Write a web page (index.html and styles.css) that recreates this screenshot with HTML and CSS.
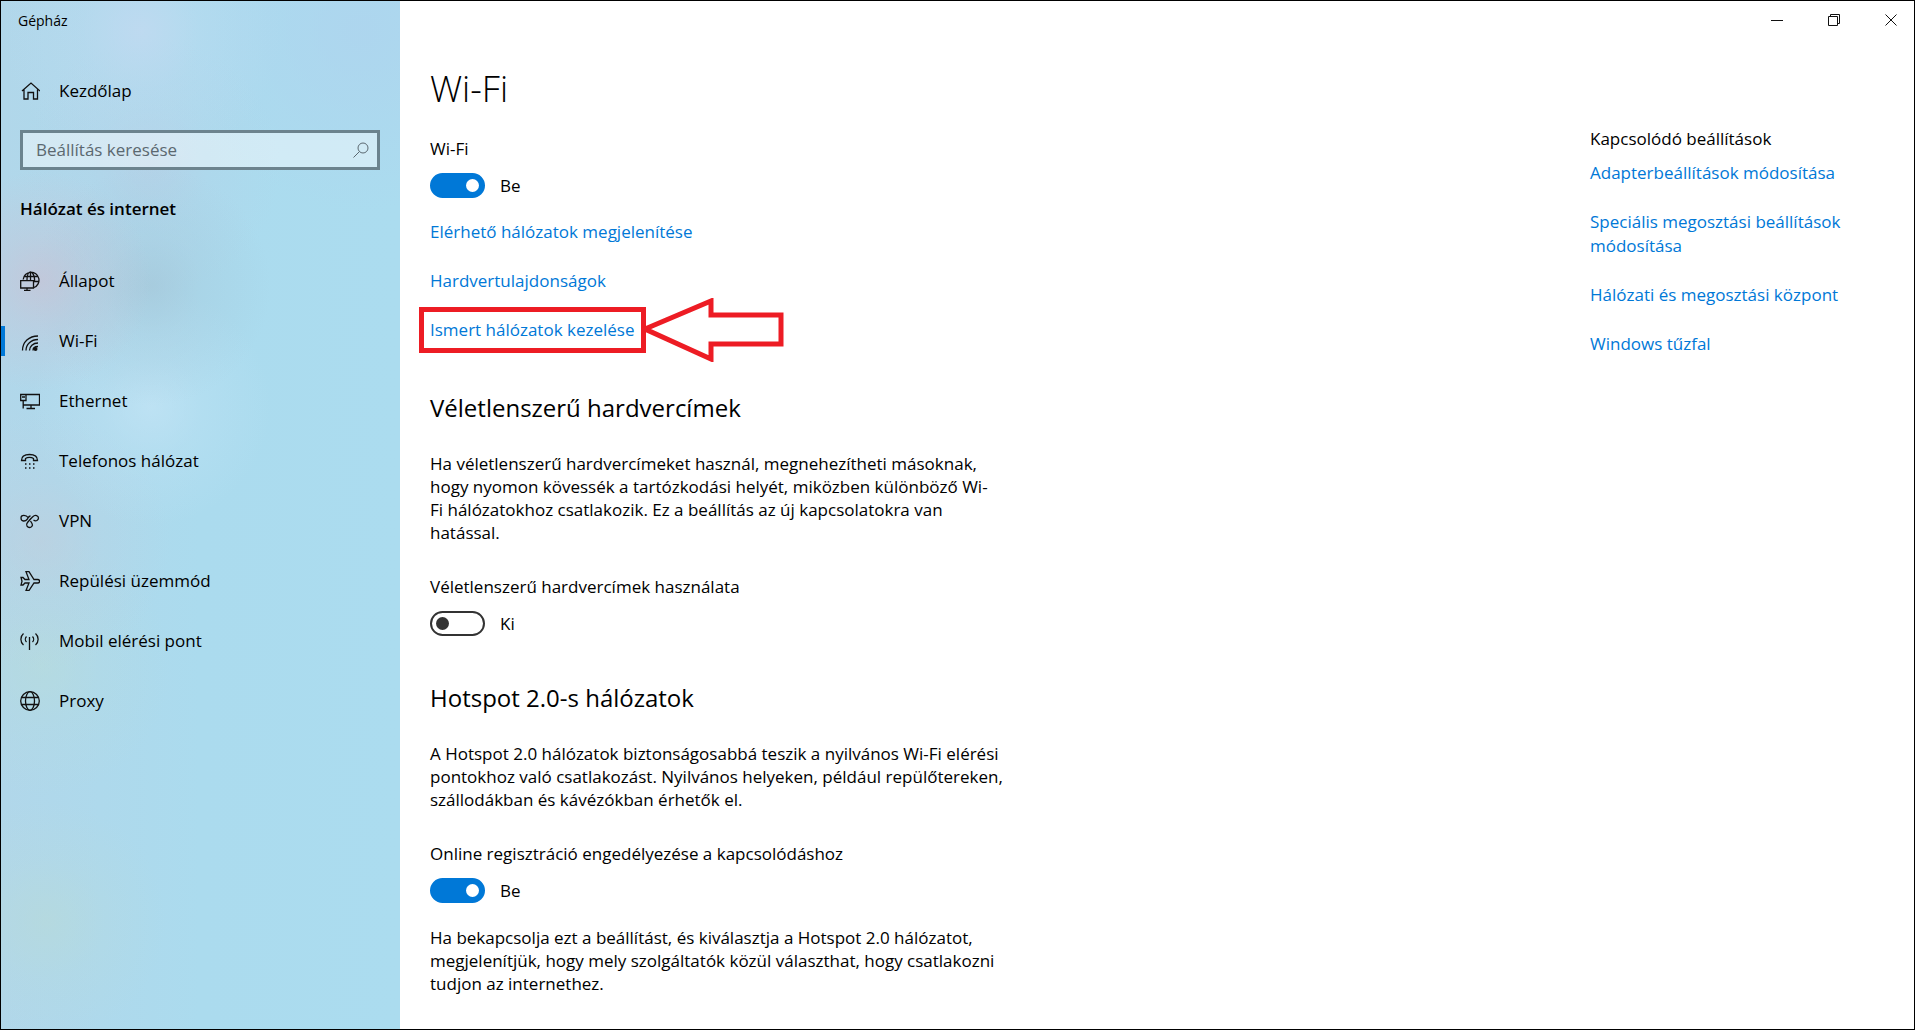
FILE: index.html
```html
<!DOCTYPE html>
<html lang="hu">
<head>
    <meta charset="UTF-8">
    <meta name="viewport" content="width=device-width, initial-scale=1.0">
    <title>Gépház</title>
    <link rel="stylesheet" href="styles.css">
</head>
<body>
    <div class="window">
        <aside class="sidebar">
            <div class="app-title">Gépház</div>

            <a class="nav-item home" href="#">
                <svg viewBox="0 0 20 20"><path d="M2 10 11 2l9 8M4 8.500v9.500h4v-6.500h5.500v6.500h4V8.500"/></svg>
                <span>Kezdőlap</span>
            </a>

            <form class="search">
                <input type="text" placeholder="Beállítás keresése" aria-label="Beállítás keresése">
                <button type="submit" aria-label="Keresés">
                    <svg viewBox="0 0 16 16"><circle cx="10" cy="6" r="5"/><path d="M6.500 9.500.5 15.500"/></svg>
                </button>
            </form>

            <h2 class="group-title">Hálózat és internet</h2>

            <nav class="nav">
                <a class="nav-item" href="#">
                    <svg viewBox="0 0 20 20"><path d="M3.200 8.500A7.900 7.900 0 1 1 14 16.500M7 9c0-4.500 1.500-8 3.500-8s4.500 4 4 9M4.500 5.500h13M14 10.500h4.500M10.500 1v8M.7 9.700h12.800v7.300H.7zM7 17v2.500M4 19.500h6.500"/></svg>
                    <span>Állapot</span>
                </a>
                <a class="nav-item active" href="#">
                    <svg viewBox="0 0 20 20"><path d="M2.500 19.500C2.500 11 9 5 18 5M6 19.500C6 13.500 11 8.500 18 8.500M9.500 19.500c0-4 3.500-7.500 8.500-7.500M13 19.500c0-2.500 2-4 5-4"/><circle class="fill" cx="15.500" cy="18" r="2"/></svg>
                    <span>Wi-Fi</span>
                </a>
                <a class="nav-item" href="#">
                    <svg viewBox="0 0 20 20"><path d="M6 3.500h13.500v10.500H3M11 14v3.500M6.500 17.500h8.500M.7 3.500H6v6H.7zM3.200 9.500v8M2 6h3"/></svg>
                    <span>Ethernet</span>
                </a>
                <a class="nav-item" href="#">
                    <svg viewBox="0 0 20 20"><path d="M1.500 9.500C1.500 5 5 3.500 9.500 3.500s8 1.500 8 6h-4V7.500c-2-1.500-6-1.500-8 0v2z"/><path d="M5 13h1.500M9 13h1.500M13 13h1.500M5 17h1.500M9 17h1.500M13 17h1.500"/></svg>
                    <span>Telefonos hálózat</span>
                </a>
                <a class="nav-item" href="#">
                    <svg viewBox="0 0 20 20"><path d="M8 6.500C6.500 4 1 3 1 7s4.500 3.500 6 1.500S8.500 5 10.500 5M11 7.500l-3.500 4c-2.500 3 .5 5 2 5s4-1.500 2.500-4L10.500 10M9 9.500l3.500-3.500C15.500 3 18.500 5 18.500 7s-2.500 4-5 2"/></svg>
                    <span>VPN</span>
                </a>
                <a class="nav-item" href="#">
                    <svg viewBox="0 0 20 20"><path d="M1 6.500h2l2 2h4L6 .7h3l5 7.800h3.500c2.800 0 2.800 3.500 0 3.500H14l-5 7.500H6l3-7.500H5l-2 2H1l1-3.700z"/></svg>
                    <span>Repülési üzemmód</span>
                </a>
                <a class="nav-item" href="#">
                    <svg viewBox="0 0 20 20"><path d="M9.500 6v13M6.500 5.500c-1.500 1.500-1.500 4 0 5.500M12.500 5.500c1.500 1.500 1.500 4 0 5.500M3.500 2.500c-3.500 3-3.500 8.500 0 11.500M15.500 2.500c3.500 3 3.500 8.500 0 11.500"/></svg>
                    <span>Mobil elérési pont</span>
                </a>
                <a class="nav-item" href="#">
                    <svg viewBox="0 0 20 20"><circle cx="10" cy="10" r="9.300"/><ellipse cx="10" cy="10" rx="4.500" ry="9.300"/><path d="M1.500 6.500h17M1.500 13.500h17"/></svg>
                    <span>Proxy</span>
                </a>
            </nav>
        </aside>

        <div class="content">
            <div class="window-buttons">
                <button type="button" aria-label="Kis méret"><svg viewBox="0 0 12 12"><path d="M0 6.500h12"/></svg></button>
                <button type="button" aria-label="Előző méret"><svg viewBox="0 0 12 12"><path d="M.5 2.500h9v9h-9zM2.500 2.500v-2h9v9h-2"/></svg></button>
                <button type="button" aria-label="Bezárás"><svg viewBox="0 0 12 12"><path d="M.5.5l11 11M11.500.5l-11 11"/></svg></button>
            </div>

            <div class="columns">
                <main class="settings">
                    <h1>Wi-Fi</h1>

                    <section>
                        <label class="setting-label" for="wifi">Wi-Fi</label>
                        <div class="toggle-row">
                            <input class="toggle" type="checkbox" id="wifi" checked>
                            <span>Be</span>
                        </div>
                        <ul class="links">
                            <li><a href="#">Elérhető hálózatok megjelenítése</a></li>
                            <li><a href="#">Hardvertulajdonságok</a></li>
                            <li>
                                <a class="marked" href="#">Ismert hálózatok kezelése
                                    <svg class="arrow" viewBox="0 0 142 64"><path d="M3 31 69 3v14h70v29H69v15z"/></svg>
                                </a>
                            </li>
                        </ul>
                    </section>

                    <section>
                        <h2>Véletlenszerű hardvercímek</h2>
                        <p>Ha véletlenszerű hardvercímeket használ, megnehezítheti másoknak,<br>
                            hogy nyomon kövessék a tartózkodási helyét, miközben különböző Wi-<br>Fi hálózatokhoz csatlakozik. Ez a beállítás az új kapcsolatokra van<br>
                            hatással.</p>
                        <label class="setting-label" for="random">Véletlenszerű hardvercímek használata</label>
                        <div class="toggle-row">
                            <input class="toggle" type="checkbox" id="random">
                            <span>Ki</span>
                        </div>
                    </section>

                    <section>
                        <h2>Hotspot 2.0-s hálózatok</h2>
                        <p>A Hotspot 2.0 hálózatok biztonságosabbá teszik a nyilvános Wi-Fi elérési<br>
                            pontokhoz való csatlakozást. Nyilvános helyeken, például repülőtereken,<br>
                            szállodákban és kávézókban érhetők el.</p>
                        <label class="setting-label" for="hotspot">Online regisztráció engedélyezése a kapcsolódáshoz</label>
                        <div class="toggle-row">
                            <input class="toggle" type="checkbox" id="hotspot" checked>
                            <span>Be</span>
                        </div>
                        <p class="note">Ha bekapcsolja ezt a beállítást, és kiválasztja a Hotspot 2.0 hálózatot,<br>
                            megjelenítjük, hogy mely szolgáltatók közül választhat, hogy csatlakozni<br>
                            tudjon az internethez.</p>
                    </section>
                </main>

                <aside class="related">
                    <h3>Kapcsolódó beállítások</h3>
                    <ul class="links">
                        <li><a href="#">Adapterbeállítások módosítása</a></li>
                        <li><a href="#">Speciális megosztási beállítások módosítása</a></li>
                        <li><a href="#">Hálózati és megosztási központ</a></li>
                        <li><a href="#">Windows tűzfal</a></li>
                    </ul>
                </aside>
            </div>
        </div>
    </div>
</body>
</html>
```
FILE: styles.css
```css
* {
    margin: 0;
    padding: 0;
    box-sizing: border-box;
}

body {
    font-family: "Segoe UI", "Open Sans", "Noto Sans", sans-serif;
    font-size: 17px;
    line-height: 24px;
    color: #000;
    background-color: #fff;
}

a {
    color: #0078d7;
    text-decoration: none;
}

ul {
    list-style: none;
}

svg {
    fill: none;
    stroke: #111;
}

button {
    background: none;
    border: none;
}

.window {
    display: flex;
    min-height: 100vh;
    border: 1px solid #000;
}

/* Sidebar */
.sidebar {
    flex: 0 0 399px;
    background:
        radial-gradient(circle at 40px 280px, rgba(205, 190, 208, 0.6), rgba(205, 190, 208, 0.3) 45px, transparent 110px),
        radial-gradient(circle at 150px 285px, rgba(165, 198, 216, 0.7), rgba(165, 198, 216, 0.3) 50px, transparent 120px),
        radial-gradient(circle at 150px 405px, rgba(196, 229, 246, 0.7), rgba(196, 229, 246, 0.3) 50px, transparent 120px),
        radial-gradient(circle at 140px 30px, rgba(194, 218, 241, 0.8), rgba(194, 218, 241, 0.3) 60px, transparent 140px),
        radial-gradient(circle at 150px 165px, rgba(184, 205, 228, 0.6), rgba(184, 205, 228, 0.2) 60px, transparent 130px),
        radial-gradient(circle at 40px 540px, rgba(192, 206, 220, 0.6), rgba(192, 206, 220, 0.2) 60px, transparent 130px),
        radial-gradient(circle at 40px 665px, rgba(184, 220, 218, 0.6), rgba(184, 220, 218, 0.2) 60px, transparent 130px),
        radial-gradient(circle at 45px 920px, rgba(184, 218, 216, 0.6), rgba(184, 218, 216, 0.2) 60px, transparent 120px),
        radial-gradient(circle at 360px 30px, rgba(174, 212, 238, 0.8), transparent 180px),
        linear-gradient(90deg, #b1d7ea, #abdbee 50%, #abdcef);
}

.app-title {
    padding: 8px 17px;
    font-size: 14px;
}

.nav-item {
    display: flex;
    align-items: center;
    gap: 19px;
    height: 60px;
    padding-left: 19px;
    color: #000;
}

.nav-item svg {
    width: 20px;
    height: 20px;
    stroke-width: 1.3;
}

.nav-item .fill {
    fill: #111;
    stroke: none;
}

.nav-item.active {
    background: linear-gradient(#0078d7, #0078d7) left center / 4px 30px no-repeat;
}

.home {
    margin-top: 20px;
}

.search {
    display: flex;
    align-items: center;
    height: 40px;
    margin: 9px 20px 0 19px;
    border: 3px solid #6c838e;
    background-color: rgba(255, 255, 255, 0.45);
}

.search input {
    flex: 1;
    min-width: 0;
    padding-left: 13px;
    font: inherit;
    background: none;
    border: none;
    outline: none;
}

.search input::placeholder {
    color: #5b6870;
}

.search button {
    display: flex;
    padding: 8px;
}

.search button svg {
    width: 16px;
    height: 16px;
    stroke: #5b6870;
}

.group-title {
    padding: 27px 19px 30px;
    font-size: 17px;
    font-weight: 600;
}

/* Content area */
.content {
    flex: 1;
    min-width: 0;
}

.window-buttons {
    display: flex;
    justify-content: flex-end;
    gap: 11px;
    height: 38px;
}

.window-buttons button {
    display: flex;
    justify-content: center;
    align-items: center;
    width: 46px;
}

.window-buttons svg {
    width: 12px;
    height: 12px;
}

.columns {
    display: flex;
    justify-content: space-between;
    padding-left: 30px;
}

.settings {
    width: 600px;
    padding-top: 26px;
}

h1 {
    margin-bottom: 24px;
    font-size: 36px;
    font-weight: 300;
    line-height: 48px;
}

.settings h2 {
    margin-bottom: 26px;
    font-size: 24px;
    font-weight: 400;
    line-height: 36px;
}

section {
    margin-bottom: 44px;
}

section:last-child {
    margin-bottom: 24px;
}

.setting-label {
    display: block;
}

p {
    line-height: 23px;
}

.settings h2 + p {
    margin-bottom: 31px;
}

.toggle-row {
    display: flex;
    align-items: center;
    gap: 15px;
    margin-top: 12px;
}

.toggle {
    appearance: none;
    display: flex;
    align-items: center;
    width: 55px;
    height: 25px;
    padding: 0 4px;
    border: 2px solid #333;
    border-radius: 13px;
}

.toggle::before {
    content: "";
    width: 13px;
    height: 13px;
    border-radius: 50%;
    background-color: #333;
}

.toggle:checked {
    justify-content: flex-end;
    background-color: #0078d7;
    border-color: #0078d7;
}

.toggle:checked::before {
    background-color: #fff;
}

.links li + li {
    margin-top: 25px;
}

.settings .links {
    margin: 22px 0 48px;
}

.note {
    margin-top: 23px;
}

/* Red frame and arrow over the link */
.marked {
    position: relative;
}

.marked::before {
    content: "";
    position: absolute;
    inset: -11px -12px -12px -11px;
    border: 5px solid #ed1c24;
}

.arrow {
    position: absolute;
    left: calc(100% + 8px);
    top: -20px;
    width: 142px;
    height: 64px;
    stroke: #ed1c24;
    stroke-width: 5;
}

.related {
    width: 324px;
    padding: 88px 60px 0 0;
}

.related h3 {
    margin-bottom: 10px;
    font-size: 17px;
    font-weight: 400;
}
```
